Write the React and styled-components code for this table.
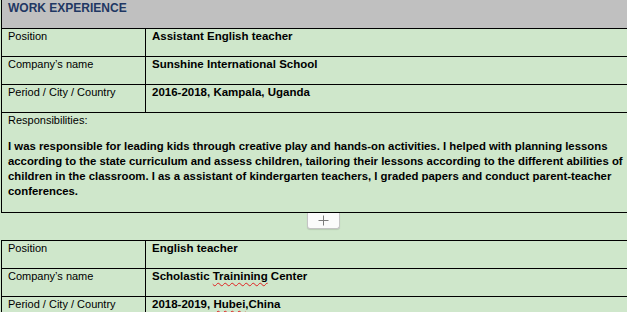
import React from 'react';
import styled, { createGlobalStyle } from 'styled-components';

const GlobalStyle = createGlobalStyle`
  html, body {
    margin: 0;
    padding: 0;
    background: #cfe7cb;
    overflow: hidden;
  }
`;

const jobs = [
  {
    position: 'Assistant English teacher',
    company: 'Sunshine International School',
    period: '2016-2018, Kampala, Uganda',
    responsibilities: [
      'I was responsible for leading kids through creative play and hands-on activities. I helped with planning lessons',
      'according to the state curriculum and assess children, tailoring their lessons according to the different abilities of',
      'children in the classroom. I as a assistant of kindergarten teachers, I graded papers and conduct parent-teacher',
      'conferences.',
    ],
  },
];

const App = () => {
  const job = jobs[0];

  return (
    <Page>
      <GlobalStyle />
      <Table>
        <Header>WORK EXPERIENCE</Header>
        <Row>
          <Label>Position</Label>
          <Value>{job.position}</Value>
        </Row>
        <Row>
          <Label>Company’s name</Label>
          <Value>{job.company}</Value>
        </Row>
        <Row>
          <Label>Period / City / Country</Label>
          <Value>{job.period}</Value>
        </Row>
        <Block>
          <Label as="div">Responsibilities:</Label>
          <Paragraph>
            {job.responsibilities.map((line) => (
              <Line key={line}>{line}</Line>
            ))}
          </Paragraph>
        </Block>
      </Table>

      <Gap>
        <AddButton title="Add row">
          <svg width="11" height="11" viewBox="0 0 11 11">
            <path d="M5.5 0.5v10M0.5 5.5h10" stroke="#7a7a7a" strokeWidth="1" fill="none" />
          </svg>
        </AddButton>
      </Gap>

      <Table $top>
        <Row>
          <Label>Position</Label>
          <Value>English teacher</Value>
        </Row>
        <Row>
          <Label>Company’s name</Label>
          <Value>
            Scholastic <Misspelled>Trainining</Misspelled> Center
          </Value>
        </Row>
        <Row>
          <Label>Period / City / Country</Label>
          <Value>
            2018-2019, <Misspelled>Hubei</Misspelled>,China
          </Value>
        </Row>
      </Table>
    </Page>
  );
};

export default App;

const Page = styled.div`
  display: flex;
  flex-direction: column;
  box-sizing: border-box;
  width: 100%;
  padding-left: 1px;
  overflow: hidden;
  font-family: 'Liberation Sans', Arial, sans-serif;
  font-size: 11px;
  line-height: 15px;
  color: #000;
`;

const Table = styled.div`
  display: flex;
  flex-direction: column;
  border-left: 1px solid #000;
  border-top: ${(p) => (p.$top ? '1px solid #000' : 'none')};
`;

const Header = styled.div`
  box-sizing: border-box;
  height: 29px;
  padding: 1px 6px 0;
  background: #c0c0c0;
  border-bottom: 1px solid #000;
  color: #1f3763;
  font-weight: bold;
  font-size: 12px;
`;

const Row = styled.div`
  display: grid;
  grid-template-columns: 144px 1fr;
  box-sizing: border-box;
  height: 28px;
  border-bottom: 1px solid #000;
`;

const Label = styled.span`
  box-sizing: border-box;
  padding: 0 6px;
  border-right: 1px solid #000;
`;

const Value = styled.span`
  padding: 0 6px;
  font-weight: bold;
  font-size: 11.5px;
  white-space: nowrap;
`;

const Block = styled.div`
  box-sizing: border-box;
  height: 100px;
  border-bottom: 1px solid #000;

  & > div {
    border-right: none;
  }
`;

const Paragraph = styled.div`
  margin-top: 11px;
  padding: 0 6px;
  font-weight: bold;
  font-size: 11.35px;
`;

const Line = styled.div`
  white-space: nowrap;
`;

const Gap = styled.div`
  height: 27px;
  padding-left: 306px;
`;

const AddButton = styled.button`
  display: flex;
  align-items: center;
  justify-content: center;
  box-sizing: border-box;
  width: 33px;
  height: 16px;
  padding: 0;
  background: #fbfbfb;
  border: 1px solid #c4c4c4;
  border-top: none;
  border-radius: 0 0 3px 3px;
  box-shadow: 0 1px 1px rgba(0, 0, 0, 0.12);
  cursor: pointer;
`;

const Misspelled = styled.span`
  text-decoration: underline wavy #e02020;
  text-decoration-thickness: 1px;
  text-underline-offset: 2px;
`;
